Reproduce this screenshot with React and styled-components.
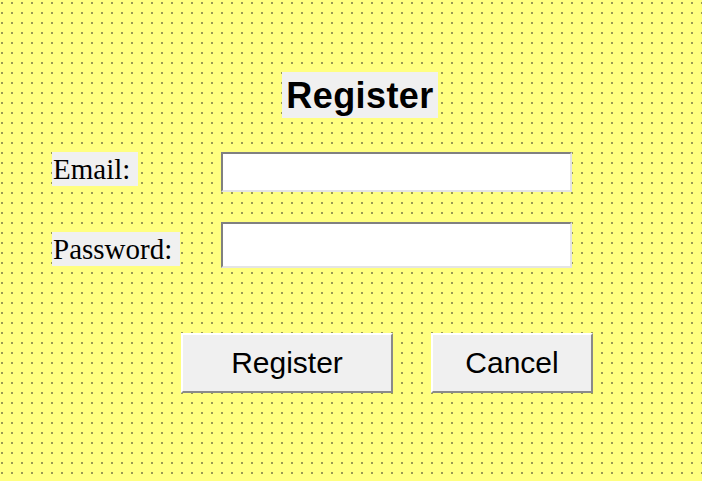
import React from "react";
import styled, { createGlobalStyle } from "styled-components";

const Global = createGlobalStyle`
  html, body { margin: 0; padding: 0; }
  body {
    width: 702px;
    height: 481px;
    overflow: hidden;
    background-color: #ffff80;
    background-image: conic-gradient(from 0deg at 2px 2px, transparent 75%, #9a9a55 0);
    background-size: 10px 10px;
    background-position: 1px 2px;
  }
`;

const Page = styled.div`
  width: 702px;
  height: 481px;
  box-sizing: border-box;
  padding-top: 72px;
  display: flex;
  flex-direction: column;
`;

const TitleRow = styled.div`
  display: flex;
  padding-left: 282px;
`;

const Title = styled.h1`
  margin: 0;
  background: #f0f0f0;
  font-family: "Liberation Sans", Arial, sans-serif;
  font-weight: bold;
  font-size: 36px;
  letter-spacing: 0.4px;
  line-height: 48px;
  height: 46px;
  width: 156px;
  text-align: center;
  color: #000;
  overflow: hidden;
`;

const Form = styled.div`
  display: grid;
  grid-template-columns: 169px 351px;
  padding-left: 52px;
  margin-top: 34px;
  row-gap: 30px;
`;

const Label = styled.label`
  justify-self: start;
  align-self: start;
  margin-top: ${(p) => p.$offset || 0}px;
  background: #f0f0f0;
  font-family: "Liberation Serif", "Times New Roman", serif;
  font-size: 29px;
  line-height: 34px;
  height: 34px;
  padding: 0 ${(p) => p.$pr || 10}px 0 1px;
  color: #000;
  white-space: nowrap;
`;

const Entry = styled.input`
  box-sizing: border-box;
  width: 351px;
  height: ${(p) => p.$h}px;
  margin: 0;
  padding: 0 4px;
  background: #ffffff;
  border-style: solid;
  border-width: 2px;
  border-color: #808080 #e4e4e4 #e4e4e4 #808080;
  outline: none;
  font-family: "Liberation Sans", Arial, sans-serif;
  font-size: 20px;
`;

const ButtonRow = styled.div`
  display: flex;
  gap: 38px;
  padding-left: 181px;
  margin-top: 65px;
`;

const Button = styled.button`
  box-sizing: border-box;
  width: ${(p) => p.$w}px;
  height: 60px;
  margin: 0;
  padding: 0;
  background: #f0f0f0;
  border-style: solid;
  border-width: 2px;
  border-color: #ffffff #8a8a8a #8a8a8a #ffffff;
  font-family: "Liberation Sans", Arial, sans-serif;
  font-size: 30px;
  color: #000;
  cursor: pointer;
`;

export default function App() {
  return (
    <>
      <Global />
      <Page>
        <TitleRow>
          <Title>Register</Title>
        </TitleRow>
        <Form>
          <Label $pr={8}>Email:</Label>
          <Entry $h={40} type="text" />
          <Label $pr={8} $offset={10}>Password:</Label>
          <Entry $h={46} type="password" />
        </Form>
        <ButtonRow>
          <Button $w={212}>Register</Button>
          <Button $w={162}>Cancel</Button>
        </ButtonRow>
      </Page>
    </>
  );
}
